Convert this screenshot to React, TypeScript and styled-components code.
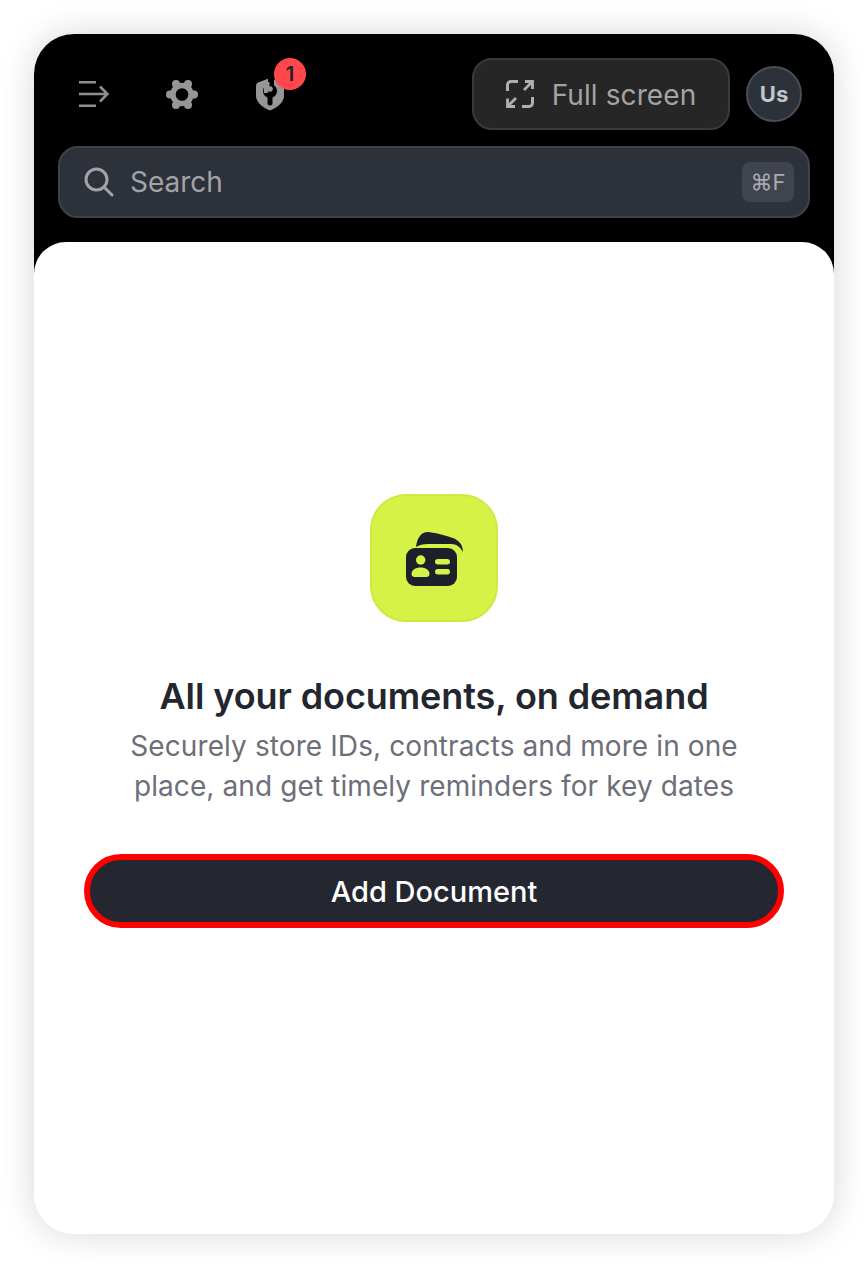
import React from "react";
import styled, { createGlobalStyle } from "styled-components";

const GlobalStyle = createGlobalStyle`
  html, body {
    margin: 0;
    padding: 0;
    background: #ffffff;
    font-family: Inter, "Liberation Sans", sans-serif;
  }
`;

const Page = styled.div`
  width: 868px;
  height: 1268px;
  padding: 34px;
  box-sizing: border-box;
  overflow: hidden;
`;

const Frame = styled.div`
  width: 800px;
  height: 1200px;
  border-radius: 40px;
  background: linear-gradient(#000000 0 300px, #ffffff 300px);
  box-shadow: 0 0 34px rgba(0, 0, 0, 0.16);
  display: flex;
  flex-direction: column;
  overflow: hidden;
`;

const Header = styled.header`
  display: flex;
  flex-direction: column;
  gap: 16px;
  padding: 24px;
`;

const TopRow = styled.div`
  height: 72px;
  display: flex;
  align-items: center;
  padding-right: 8px;
`;

const IconGroup = styled.div`
  display: flex;
  margin-left: -8px;
`;

const IconButton = styled.div`
  width: 88px;
  height: 72px;
  display: flex;
  align-items: center;
  justify-content: center;
  position: relative;
`;

const Badge = styled.span`
  position: absolute;
  top: 0;
  left: 48px;
  width: 32px;
  height: 32px;
  border-radius: 50%;
  background: #ff474c;
  color: #1d1f24;
  font-size: 20px;
  font-weight: 600;
  display: flex;
  align-items: center;
  justify-content: center;
`;

const Spacer = styled.div`
  flex: 1;
`;

const FullScreen = styled.div`
  width: 258px;
  height: 72px;
  box-sizing: border-box;
  border: 2px solid #3a3a3c;
  border-radius: 20px;
  background: #262627;
  color: #a3a3a5;
  display: flex;
  align-items: center;
  justify-content: center;
  gap: 18px;
  font-size: 28px;
  letter-spacing: 0.1px;
`;

const FullScreenLabel = styled.span`
  padding-top: 1px;
`;

const Avatar = styled.div`
  width: 56px;
  height: 56px;
  margin-left: 16px;
  box-sizing: border-box;
  border: 2px solid #4a4e57;
  border-radius: 50%;
  background: #2d3139;
  color: #c4c5c8;
  font-size: 22px;
  font-weight: 700;
  display: flex;
  align-items: center;
  justify-content: center;
`;

const SearchBar = styled.div`
  height: 72px;
  box-sizing: border-box;
  border: 2px solid #3e424b;
  border-radius: 20px;
  background: #2d3139;
  color: #a1a3a8;
  display: flex;
  align-items: center;
  gap: 16px;
  padding: 0 14px 0 24px;
  font-size: 28px;
`;

const SearchLabel = styled.span`
  flex: 1;
`;

const Shortcut = styled.span`
  width: 52px;
  height: 40px;
  border-radius: 8px;
  background: #40444c;
  color: #a9abb0;
  font-size: 22px;
  display: flex;
  align-items: center;
  justify-content: center;
`;

const Panel = styled.main`
  flex: 1;
  background: #ffffff;
  border-radius: 32px 32px 0 0;
  display: flex;
  flex-direction: column;
  align-items: center;
  padding: 252px 50px 0;
`;

const AppIcon = styled.div`
  width: 128px;
  height: 128px;
  box-sizing: border-box;
  border: 2px solid #cfea3e;
  border-radius: 36px;
  background: #d7f246;
  display: flex;
  align-items: center;
  justify-content: center;
  margin-bottom: 50px;
`;

const Heading = styled.h1`
  margin: 0;
  color: #23262e;
  font-size: 36px;
  line-height: 48px;
  font-weight: 600;
  letter-spacing: -0.08px;
`;

const Description = styled.p`
  margin: 6px 0 0;
  color: #6c6f7a;
  font-size: 28px;
  line-height: 40px;
  letter-spacing: 0.1px;
  text-align: center;
`;

const AddButton = styled.button`
  width: 700px;
  height: 74px;
  margin-top: 48px;
  box-sizing: border-box;
  border: 6px solid #ff0000;
  border-radius: 37px;
  background: #242730;
  color: #ffffff;
  font-family: inherit;
  font-size: 29px;
  font-weight: 450;
`;

export default function App() {
  return (
    <Page>
      <GlobalStyle />
      <Frame>
        <Header>
          <TopRow>
            <IconGroup>
              <IconButton>
                <svg width="30" height="28" viewBox="0 0 30 28" fill="none" stroke="#8f8f8f" strokeWidth="2.6">
                  <path d="M0 2.300h17M0 14h28M0 25.700h17M21 6.500l7.500 7.500-7.500 7.500" />
                </svg>
              </IconButton>
              <IconButton>
                <svg width="32" height="29" viewBox="0 0 32 29" fill="#969696">
                  <circle cx="16" cy="14.500" r="11.800" />
                  <circle cx="28" cy="14.500" r="4" />
                  <circle cx="4" cy="14.500" r="4" />
                  <circle cx="22" cy="4" r="4" />
                  <circle cx="10" cy="4" r="4" />
                  <circle cx="22" cy="25" r="4" />
                  <circle cx="10" cy="25" r="4" />
                  <circle cx="16" cy="14.500" r="6.300" fill="#000000" />
                </svg>
              </IconButton>
              <IconButton>
                <svg width="28" height="34" viewBox="0 0 28 34">
                  <path
                    fill="#969696"
                    d="M14 1l12 4.500Q28 6 28 9v10c0 7-8 12-14 14.500C8 31 0 26 0 19V9q0-3 2-3.500z"
                  />
                  <circle cx="14" cy="14" r="7" fill="#000000" />
                  <rect x="11.500" y="14" width="5" height="14.500" rx="2.500" fill="#000000" />
                  <path fill="#000000" d="M12 0h6v10h-6z" />
                  <path fill="#969696" d="M8 5h5.500v7.500l-2 3.500H8z" />
                  <circle cx="14" cy="12" r="2.800" fill="#969696" />
                </svg>
                <Badge>1</Badge>
              </IconButton>
            </IconGroup>
            <Spacer />
            <FullScreen>
              <svg width="28" height="28" viewBox="0 0 28 28" fill="none" stroke="#b0b0b2" strokeWidth="3">
                <path d="M12 1.500H5A3.500 3.500 0 0 0 1.500 5v6M16 26.500h7a3.500 3.500 0 0 0 3.500-3.500v-6" />
                <path d="M19 1.500h7.500V9M26.500 1.500L18 10M1.500 18.500v8H9M1.500 26.500L10 18" strokeWidth="2.800" />
              </svg>
              <FullScreenLabel>Full screen</FullScreenLabel>
            </FullScreen>
            <Avatar>Us</Avatar>
          </TopRow>
          <SearchBar>
            <svg width="30" height="30" viewBox="0 0 30 30" fill="none" stroke="#a1a3a8" strokeWidth="3" strokeLinecap="round">
              <circle cx="12.500" cy="12.500" r="10.500" />
              <path d="M20.500 20.500L28 28" />
            </svg>
            <SearchLabel>Search</SearchLabel>
            <Shortcut>⌘F</Shortcut>
          </SearchBar>
        </Header>
        <Panel>
          <AppIcon>
            <svg width="60" height="56" viewBox="0 0 60 56">
              <rect x="2" y="18" width="51" height="38" rx="9" fill="#1c202b" />
              <path fill="#1c202b" d="M12 17C13 8 17 2 24 2c4 0 20 4 25 6 5 2 10 6 10 14-3-5-6-8-12-8L24 14c-5 0-9 1-12 3z" />
              <circle cx="16.700" cy="30" r="4.700" fill="#d7f246" />
              <path fill="#d7f246" d="M7.500 44c0-4 4-6.500 9-6.500s9 2.500 9 6.500c0 2-1.500 3-3 3h-12c-1.500 0-3-1-3-3z" />
              <rect x="31" y="29" width="15" height="5.500" rx="2.750" fill="#d7f246" />
              <rect x="31" y="39" width="15" height="5.500" rx="2.750" fill="#d7f246" />
            </svg>
          </AppIcon>
          <Heading>All your documents, on demand</Heading>
          <Description>
            Securely store IDs, contracts and more in one
            <br />
            place, and get timely reminders for key dates
          </Description>
          <AddButton>Add Document</AddButton>
        </Panel>
      </Frame>
    </Page>
  );
}
